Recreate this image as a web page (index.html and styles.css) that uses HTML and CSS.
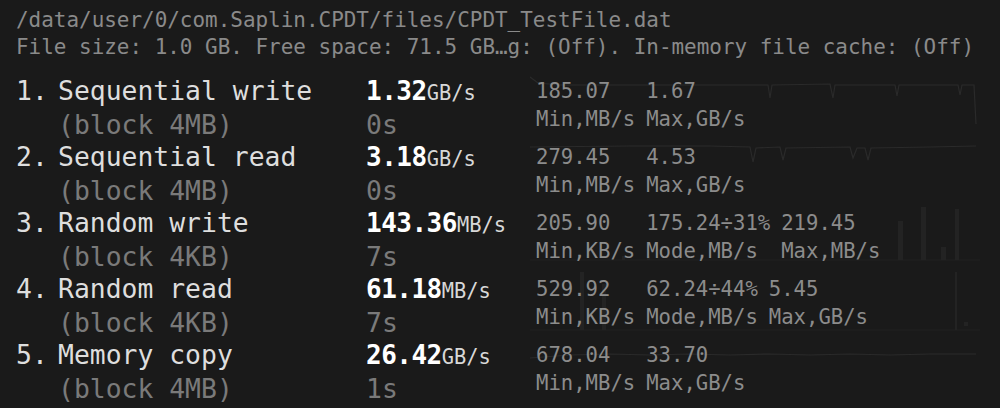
FILE: index.html
```html
<!DOCTYPE html>
<html>
<head>
<meta charset="utf-8">
<link rel="stylesheet" href="styles.css">
</head>
<body>
<div class="page">
  <div class="header">
    <div>/data/user/0/com.Saplin.CPDT/files/CPDT_TestFile.dat</div>
    <div>File size: 1.0 GB. Free space: 71.5 GB…g: (Off). In-memory file cache: (Off)</div>
  </div>

  <div class="tests">
    <div class="test">
      <div class="num">1.</div>
      <div class="name">Sequential write</div>
      <div class="val"><b>1.32</b><span class="unit">GB/s</span></div>
      <div class="stats">
        <svg class="chart" viewBox="0 0 450 66" preserveAspectRatio="none">
          <polyline class="ln" points="0,3 8,9 30,11 120,11 238,11 240,24 242,11 300,10 303,24 305,11 365,11 367,22 369,11 428,11 430,21 432,11 444,11 446,50"/>
        </svg>
        <div class="col"><span>185.07</span><span>Min,MB/s</span></div>
        <div class="col"><span>1.67</span><span>Max,GB/s</span></div>
      </div>
      <div class="sub">(block 4MB)</div>
      <div class="time">0s</div>
    </div>

    <div class="test">
      <div class="num">2.</div>
      <div class="name">Sequential read</div>
      <div class="val"><b>3.18</b><span class="unit">GB/s</span></div>
      <div class="stats">
        <svg class="chart" viewBox="0 0 450 66" preserveAspectRatio="none">
          <polyline class="ln" points="0,7 100,6 180,6 220,7 223,22 226,8 250,7 253,20 256,8 320,7 323,18 327,8 335,8 338,20 341,8 400,7 446,6"/>
        </svg>
        <div class="col"><span>279.45</span><span>Min,MB/s</span></div>
        <div class="col"><span>4.53</span><span>Max,GB/s</span></div>
      </div>
      <div class="sub">(block 4MB)</div>
      <div class="time">0s</div>
    </div>

    <div class="test">
      <div class="num">3.</div>
      <div class="name">Random write</div>
      <div class="val"><b>143.36</b><span class="unit">MB/s</span></div>
      <div class="stats">
        <svg class="chart" viewBox="0 0 450 66" preserveAspectRatio="none">
          <line class="base" x1="0" y1="54" x2="450" y2="54"/>
          <rect class="bar" x="368" y="15" width="5" height="39"/>
          <rect class="bar" x="391" y="1" width="5" height="53"/>
          <rect class="bar" x="411" y="41" width="5" height="13"/>
          <rect class="bar" x="425" y="3" width="4" height="51"/>
          <rect class="bar" x="92" y="50" width="3" height="4"/>
          <rect class="bar" x="117" y="50" width="3" height="4"/>
        </svg>
        <div class="col"><span>205.90</span><span>Min,KB/s</span></div>
        <div class="col"><span>175.24÷31%</span><span>Mode,MB/s</span></div>
        <div class="col"><span>219.45</span><span>Max,MB/s</span></div>
      </div>
      <div class="sub">(block 4KB)</div>
      <div class="time">7s</div>
    </div>

    <div class="test">
      <div class="num">4.</div>
      <div class="name">Random read</div>
      <div class="val"><b>61.18</b><span class="unit">MB/s</span></div>
      <div class="stats">
        <svg class="chart" viewBox="0 0 450 66" preserveAspectRatio="none">
          <line class="base" x1="0" y1="58" x2="450" y2="58"/>
          <rect class="bar" x="50" y="0" width="4" height="58"/>
          <rect class="bar" x="72" y="12" width="4" height="46"/>
          <rect class="bar" x="425" y="0" width="2" height="58"/>
          <rect class="bar" x="434" y="50" width="4" height="4"/>
        </svg>
        <div class="col"><span>529.92</span><span>Min,KB/s</span></div>
        <div class="col"><span>62.24÷44%</span><span>Mode,MB/s</span></div>
        <div class="col"><span>5.45</span><span>Max,GB/s</span></div>
      </div>
      <div class="sub">(block 4KB)</div>
      <div class="time">7s</div>
    </div>

    <div class="test">
      <div class="num">5.</div>
      <div class="name">Memory copy</div>
      <div class="val"><b>26.42</b><span class="unit">GB/s</span></div>
      <div class="stats">
        <svg class="chart" viewBox="0 0 450 66" preserveAspectRatio="none">
          <polyline class="ln" points="0,20 40,17 80,16 120,17 160,16 200,17 240,16 280,17 320,16 360,17 400,16 446,16"/>
        </svg>
        <div class="col"><span>678.04</span><span>Min,MB/s</span></div>
        <div class="col"><span>33.70</span><span>Max,GB/s</span></div>
      </div>
      <div class="sub">(block 4MB)</div>
      <div class="time">1s</div>
    </div>
  </div>
</div>
</body>
</html>
```

FILE: styles.css
```css
html, body {
  margin: 0;
  padding: 0;
  background: #1a1a1a;
}

body {
  width: 1000px;
  height: 408px;
  overflow: hidden;
  font-family: "DejaVu Sans Mono", "Liberation Mono", monospace;
}

.page {
  padding: 7px 0 0 16px;
}

.header {
  font-size: 20.95px;
  line-height: 27px;
  color: #8a8a8a;
  white-space: nowrap;
}

.tests {
  margin-top: 13px;
}

.test {
  display: grid;
  grid-template-columns: 42px 308px 170px 450px;
  grid-template-rows: 34px 32px;
  align-items: baseline;
}

.num, .name {
  font-size: 26.4px;
  color: #dedede;
  line-height: 34px;
  white-space: nowrap;
}

.sub {
  grid-column: 2;
  font-size: 26.4px;
  line-height: 33px;
  color: #7a7a7a;
  white-space: nowrap;
}

.val {
  line-height: 34px;
  white-space: nowrap;
  color: #ffffff;
}

.val b {
  font-size: 26px;
  font-weight: bold;
  letter-spacing: -0.5px;
}

.unit {
  font-size: 20.4px;
  color: #d8d8d8;
}

.time {
  grid-column: 3;
  font-size: 26.4px;
  line-height: 33px;
  color: #7a7a7a;
}

.stats {
  grid-column: 4;
  grid-row: 1 / span 2;
  align-self: start;
  position: relative;
  display: flex;
  gap: 11px;
  padding-top: 3px;
  height: 63px;
  font-size: 20.6px;
  line-height: 28px;
  color: #8c8c8c;
}

.col {
  position: relative;
  display: flex;
  flex-direction: column;
  white-space: nowrap;
}

.chart {
  position: absolute;
  left: -6px;
  top: 0;
  width: 450px;
  height: 66px;
}

.ln {
  fill: none;
  stroke: #2a2a2a;
  stroke-width: 1.2;
}

.base {
  stroke: #212121;
  stroke-width: 1;
}

.bar {
  fill: #232323;
}
```
